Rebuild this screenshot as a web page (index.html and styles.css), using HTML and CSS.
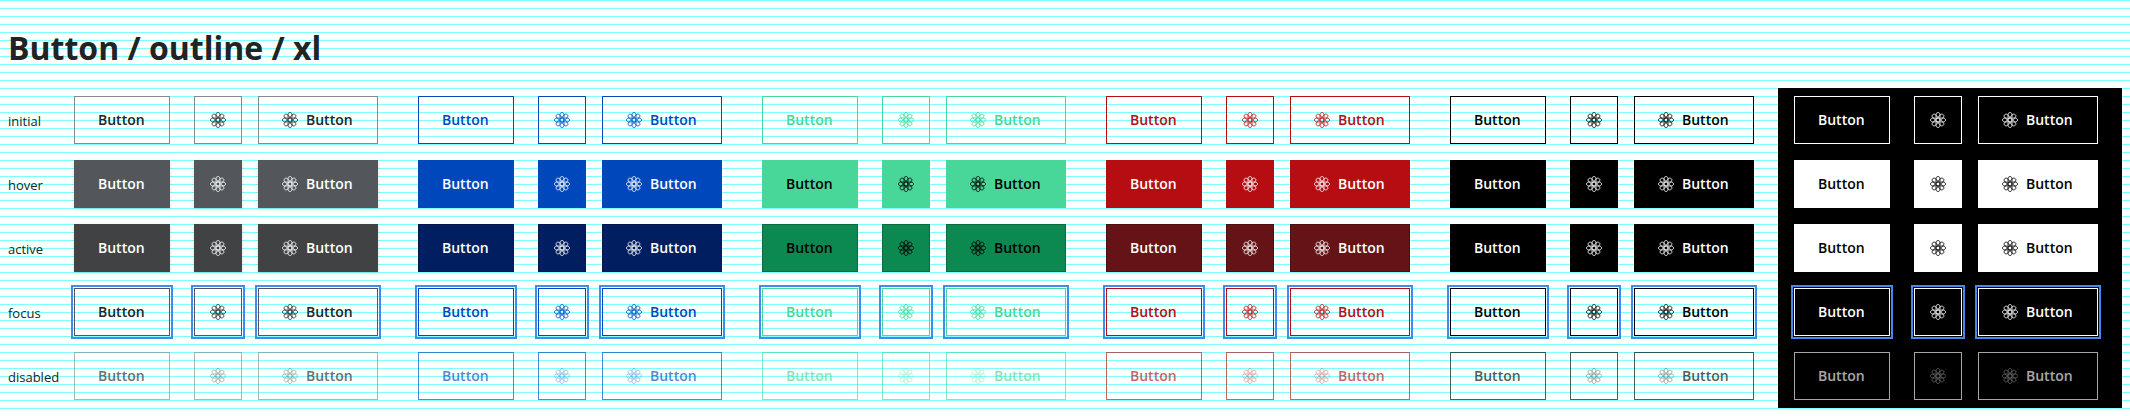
FILE: index.html
```html
<!DOCTYPE html>
<html lang="en">
<head>
<meta charset="utf-8">
<title>Button / outline / xl</title>
<link rel="stylesheet" href="styles.css">
</head>
<body>
<svg class="sprite" aria-hidden="true">
  <symbol id="atom" viewBox="0 0 16 16">
    <g fill="none" stroke="currentColor" stroke-width="0.8">
      <path id="orbit" d="M0.5 8C0.5 6.6 1.6 6 3 6C5 6 6 6.2 8 6.2S11 6 13 6C14.4 6 15.5 6.6 15.5 8S14.4 10 13 10C11 10 10 9.8 8 9.8S5 10 3 10C1.6 10 0.5 9.4 0.5 8Z"/>
      <use href="#orbit" transform="rotate(45 8 8)"/>
      <use href="#orbit" transform="rotate(90 8 8)"/>
      <use href="#orbit" transform="rotate(135 8 8)"/>
    </g>
  </symbol>
</svg>
<h1 class="title">Button / outline / xl</h1>
<table class="matrix">
  <tbody id="rows"></tbody>
</table>
<script src="script.js"></script>
</body>
</html>
```
FILE: styles.css
```css
body {
  margin: 0;
  padding: 24px 8px 8px;
  background: repeating-linear-gradient(#80ffff 0 1px, #fff 1px 8px);
  color: #212325;
  font-family: "Open Sans", "Noto Sans", sans-serif;
  font-size: 13px;
  line-height: 24px;
}

.sprite {
  position: absolute;
  width: 0;
  height: 0;
}

.title {
  margin: 0 0 16px;
  font-size: 32px;
  font-weight: 700;
  line-height: 48px;
}

.matrix {
  width: 100%;
  table-layout: fixed;
  border-collapse: collapse;
}

.label {
  width: 50px;
  padding: 1px 0 0;
  font-weight: 400;
  text-align: left;
}

.cell {
  padding: 8px 24px 8px 16px;
}

.group {
  display: flex;
  gap: 16px;
}

.btn {
  display: inline-flex;
  align-items: center;
  gap: 8px;
  box-sizing: border-box;
  height: 48px;
  min-width: 48px;
  padding: 0 23px;
  border: 1px solid var(--line);
  border-radius: 0;
  background: transparent;
  color: var(--ink);
  font: 600 14px/24px "Open Sans", "Noto Sans", sans-serif;
}

.btn-text {
  min-width: 96px;
}

.btn-icon {
  justify-content: center;
  padding: 0;
  margin-left: 8px;
}

.btn-both {
  min-width: 120px;
}

.icon {
  width: 16px;
  height: 16px;
}

.neutral {
  --ink: #212325;
  --line: #878a92;
  --fill: #53565a;
  --press: #414244;
  --press-line: #414244;
  --on: #fff;
}

.primary {
  --ink: #0047bb;
  --line: #0047bb;
  --fill: #0047bb;
  --press: #001e60;
  --press-line: #00174a;
  --on: #fff;
}

.success {
  --ink: #49d799;
  --line: #49d799;
  --fill: #49d799;
  --press: #0c8951;
  --press-line: #096b3f;
  --on: #000;
}

.danger {
  --ink: #b50d12;
  --line: #b50d12;
  --fill: #b50d12;
  --press: #651316;
  --press-line: #4f0f11;
  --on: #fff;
}

.black {
  --ink: #000;
  --line: #000;
  --fill: #000;
  --press: #000;
  --press-line: #000;
  --on: #fff;
}

.white {
  --ink: #fff;
  --line: #fff;
  --fill: #fff;
  --press: #fff;
  --press-line: #fff;
  --on: #000;
  background: #000;
}

.is-hover {
  border-color: var(--fill);
  background: var(--fill);
  color: var(--on);
}

.is-active {
  border-color: var(--press-line);
  background: var(--press);
  color: var(--on);
}

.neutral .is-hover,
.neutral .is-active {
  box-shadow: 0 1px 4px rgba(0, 0, 0, 0.15);
}

.is-focus {
  outline: 2px solid #4589f0;
  outline-offset: 1px;
}

.neutral .is-focus {
  border-color: #53565a;
}

.btn:disabled {
  opacity: 0.65;
}

.btn:disabled .icon {
  opacity: 0.6;
}
```
FILE: script.js
```javascript
const themes = ['neutral', 'primary', 'success', 'danger', 'black', 'white'];
const states = ['initial', 'hover', 'active', 'focus', 'disabled'];
const icon = '<svg class="icon" aria-hidden="true"><use href="#atom"/></svg>';

function group(theme, state) {
  const attrs = state === 'disabled' ? ' disabled' : '';
  return `<td class="cell ${theme}"><div class="group">
    <button type="button" class="btn btn-text is-${state}"${attrs}>Button</button>
    <button type="button" class="btn btn-icon is-${state}" aria-label="Button"${attrs}>${icon}</button>
    <button type="button" class="btn btn-both is-${state}"${attrs}>${icon}Button</button>
  </div></td>`;
}

document.getElementById('rows').innerHTML = states
  .map(state => `<tr><th class="label" scope="row">${state}</th>${themes.map(theme => group(theme, state)).join('')}</tr>`)
  .join('');
```
